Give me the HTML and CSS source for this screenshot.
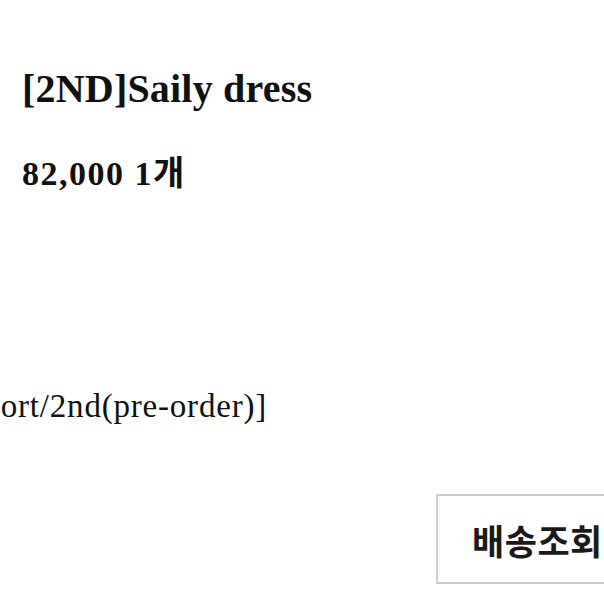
FILE: index.html
```html
<!DOCTYPE html>
<html lang="ko">
<head>
<meta charset="utf-8">
<link rel="stylesheet" href="styles.css">
</head>
<body>
<main class="page">
  <h1 class="title">[2ND]Saily dress</h1>
  <p class="price">82,000 1개</p>
  <div class="option-row"><span class="option">[Saily dress short/2nd(pre-order)]</span></div>
  <div class="actions"><button class="track-btn" type="button">배송조회</button></div>
</main>
</body>
</html>
```
FILE: styles.css
```css
html, body {
  margin: 0;
  padding: 0;
  background: #ffffff;
  overflow: hidden;
}
.page {
  width: 604px;
  height: 604px;
  display: flex;
  flex-direction: column;
  font-family: "Liberation Serif", "Noto Sans CJK KR", serif;
  color: #111;
}
.title {
  margin: 65px 0 0 22px;
  font-size: 40px;
  line-height: 48px;
  font-weight: 700;
  letter-spacing: 0.2px;
  white-space: nowrap;
}
.price {
  margin: 41px 0 0 22px;
  font-size: 34px;
  line-height: 40px;
  font-weight: 700;
  letter-spacing: 1.5px;
  white-space: nowrap;
}
.option-row {
  margin-top: 194px;
  width: 267px;
  display: flex;
  justify-content: flex-end;
}
.option {
  flex: none;
  font-size: 33px;
  line-height: 36px;
  letter-spacing: 0.8px;
  white-space: nowrap;
}
.actions {
  margin: 70px 0 0 436px;
  display: flex;
}
.track-btn {
  flex: none;
  width: 220px;
  height: 90px;
  box-sizing: border-box;
  border: 2px solid #cfcfcf;
  background: #fff;
  padding: 0 0 0 34px;
  text-align: left;
  font-family: "Noto Sans CJK KR", sans-serif;
  font-size: 35px;
  font-weight: 700;
  letter-spacing: 0.5px;
  color: #1a1a1a;
}
```
